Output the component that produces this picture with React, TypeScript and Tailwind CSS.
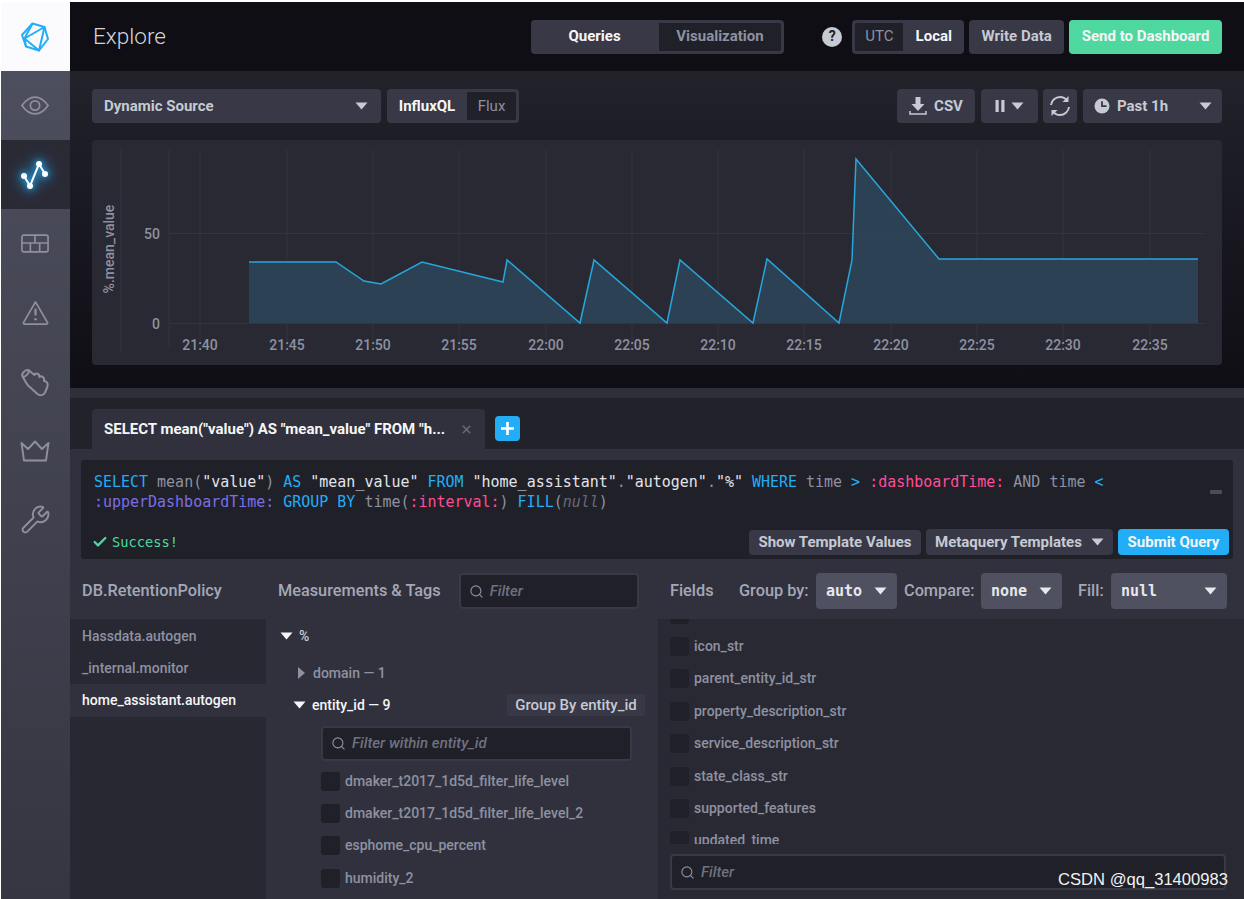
import { Check, Search, Wrench, X } from "lucide-react";
import { ReactNode } from "react";

const Caret = ({ className = "" }: { className?: string }) => (
  <svg width="13" height="8" viewBox="0 0 13 8" className={className}>
    <path d="M0.5 0.5h12L6.5 7.5z" fill="currentColor" />
  </svg>
);

const Logo = () => (
  <svg width="30" height="30" viewBox="0 0 30 30" fill="none" stroke="#22ADF6" strokeWidth="2" strokeLinejoin="round">
    <path d="M12.5 1.5 L24.5 5 L28 17 L19 28.5 L6 24.5 L2 13 Z" />
    <path d="M12.5 1.5 L4.5 16.5 L19 28.5 L24.5 5 L4.5 16.5 M4.5 16.5 L6 24.5" />
  </svg>
);

const NavIcons: Record<string, ReactNode> = {
  eye: (
    <svg width="28" height="19" viewBox="0 0 30 20" fill="none" stroke="currentColor" strokeWidth="1.8">
      <path d="M1 10 C6 3 10 1 15 1 S24 3 29 10 C24 17 20 19 15 19 S6 17 1 10Z" />
      <circle cx="15" cy="10" r="5" />
    </svg>
  ),
  table: (
    <svg width="28" height="19" viewBox="0 0 30 20" fill="none" stroke="currentColor" strokeWidth="1.8">
      <rect x="1" y="1" width="28" height="18" rx="2" />
      <path d="M1 9.5h28M15 1v8.5M10 9.5v9.5M20 9.5v9.5" />
    </svg>
  ),
  alert: (
    <svg width="27" height="25" viewBox="0 0 28 26" fill="none" stroke="currentColor" strokeWidth="1.8" strokeLinejoin="round">
      <path d="M14 2 L26.5 23.5 Q27 25 25 25 L3 25 Q1 25 1.5 23.5 Z" />
      <path d="M14 9v7" strokeWidth="2.4" />
      <circle cx="14" cy="20" r="1.3" fill="currentColor" stroke="none" />
    </svg>
  ),
  hand: (
    <svg width="30" height="30" viewBox="0 0 30 30" fill="none" stroke="currentColor" strokeWidth="2" strokeLinejoin="round" strokeLinecap="round">
      <path d="M2.5 9.5 C1 6.5 6 1.5 9 3.5 L14.5 8 C15.5 5.5 19.5 6.5 19.5 10 C21 8.5 25 10 24 14 C26.5 14 28.5 16.5 27.5 19.5 L25 25.5 C23.5 28.5 20 29 17.5 27 L7.5 18 Z" />
      <path d="M3 10 C5.5 10 9 6.5 9 3.5" />
    </svg>
  ),
  crown: (
    <svg width="30" height="22" viewBox="0 0 30 22" fill="none" stroke="currentColor" strokeWidth="1.9" strokeLinejoin="round">
      <path d="M1.5 3 L8 9 L15 1.5 L22 9 L28.5 3 L26 20.5 L4 20.5 Z" />
    </svg>
  ),
};

const NavItem = ({ children }: { children: ReactNode }) => (
  <div className="flex h-[69px] items-center justify-center pr-[1px] text-[#8f8f9e]">{children}</div>
);

const Sidebar = () => (
  <aside className="flex w-[69px] shrink-0 flex-col bg-gradient-to-b from-[#4f5060] to-[#363642]">
    <div className="flex h-[69px] items-center justify-center bg-[#fbfbfd] pr-[1px]">
      <Logo />
    </div>
    <NavItem>{NavIcons.eye}</NavItem>
    <div className="flex h-[69px] items-center justify-center bg-[#2a2a35] pr-[2px]">
      <svg width="34" height="36" viewBox="0 0 34 36" fill="none" className="[filter:drop-shadow(0_0_3px_#22adf6)_drop-shadow(0_0_7px_#22adf6)]">
        <path d="M6 19 L12 29 L21 7 L27 17" stroke="#fff" strokeWidth="2" />
        <circle cx="6" cy="19" r="3" fill="#fff" />
        <circle cx="12" cy="29" r="3" fill="#fff" />
        <circle cx="21" cy="7" r="3" fill="#fff" />
        <circle cx="27" cy="17" r="3" fill="#fff" />
      </svg>
    </div>
    <NavItem>{NavIcons.table}</NavItem>
    <NavItem>{NavIcons.alert}</NavItem>
    <NavItem>{NavIcons.hand}</NavItem>
    <NavItem>{NavIcons.crown}</NavItem>
    <NavItem>
      <Wrench size={31} strokeWidth={1.5} />
    </NavItem>
  </aside>
);

const Btn = ({ className = "", children }: { className?: string; children: ReactNode }) => (
  <div className={`flex items-center whitespace-nowrap rounded-[4px] font-bold ${className}`}>{children}</div>
);

const Header = () => (
  <header className="flex h-[69px] shrink-0 items-center bg-[#0f0e15] pl-[23px] pr-[22px]">
    <h1 className="w-[438px] text-[22.5px] font-light text-[#d2d5dc]">Explore</h1>
    <div className="flex h-[34px] w-[254px] rounded-[4px] bg-[#383846] text-[15px] font-bold">
      <div className="flex w-[128px] items-center justify-center text-[#f6f6f8]">Queries</div>
      <div className="m-[3px] ml-0 flex flex-1 items-center justify-center rounded-r-[2px] bg-[#202028] text-[#8e91a1]">Visualization</div>
    </div>
    <div className="ml-[38px] flex h-5 w-5 items-center justify-center rounded-full bg-[#c6cad3] text-[14px] font-bold text-[#202028]">?</div>
    <div className="ml-[10px] flex h-[34px] w-[112px] rounded-[4px] bg-[#383846] text-[15px] font-bold">
      <div className="m-[3px] mr-0 flex w-[48px] items-center justify-center rounded-l-[2px] bg-[#202028] font-normal text-[#8e91a1]">UTC</div>
      <div className="flex flex-1 items-center justify-center text-[#f6f6f8]">Local</div>
    </div>
    <Btn className="ml-[5px] h-[34px] w-[95px] justify-center bg-[#383846] text-[15px] text-[#c6cad3]">Write Data</Btn>
    <Btn className="ml-[5px] h-[34px] w-[153px] justify-center bg-[#4ed8a0] text-[15px] text-[#f6f6f8]">Send to Dashboard</Btn>
  </header>
);

const Toolbar = () => (
  <div className="flex h-[34px] items-center text-[15px] text-[#c6cad3]">
    <Btn className="h-full w-[289px] justify-between bg-[#383846] pl-3 pr-[13px]">
      Dynamic Source
      <Caret />
    </Btn>
    <div className="ml-[6px] flex h-full w-[132px] rounded-[4px] bg-[#383846] font-bold">
      <div className="flex w-[80px] items-center justify-center text-[#f6f6f8]">InfluxQL</div>
      <div className="m-[3px] ml-0 flex flex-1 items-center justify-center rounded-r-[2px] bg-[#202028] font-normal text-[#8e91a1]">Flux</div>
    </div>
    <Btn className="ml-auto h-full w-[78px] justify-center gap-[7px] bg-[#383846]">
      <svg width="18" height="20" viewBox="0 0 18 20" fill="none">
        <path d="M6.5 1h5v7h4L9 15 2.5 8h4z" fill="currentColor" />
        <path d="M1 15v3h16v-3" stroke="currentColor" strokeWidth="1.5" />
      </svg>
      CSV
    </Btn>
    <Btn className="ml-[6px] h-full w-[57px] justify-center gap-[6px] bg-[#383846]">
      <svg width="10" height="12" viewBox="0 0 10 12">
        <path d="M0.5 0h3.2v12H0.5zM6.3 0h3.2v12H6.3z" fill="currentColor" />
      </svg>
      <Caret />
    </Btn>
    <Btn className="ml-[5px] h-full w-[34px] justify-center bg-[#383846]">
      <svg width="22" height="22" viewBox="0 0 22 22" fill="none" stroke="currentColor" strokeWidth="1.9">
        <path d="M2 10 C2.5 5.5 6.5 2 11 2 C14 2 16.5 3.5 18 5.5" />
        <path d="M20 12 C19.5 16.5 15.5 20 11 20 C8 20 5.5 18.5 4 16.5" />
        <path d="M19.5 1v6h-6z" fill="currentColor" stroke="none" />
        <path d="M2.5 21v-6h6z" fill="currentColor" stroke="none" />
      </svg>
    </Btn>
    <Btn className="ml-[6px] h-full w-[139px] bg-[#383846] pl-[11px] pr-[10px]">
      <svg width="16" height="16" viewBox="0 0 16 16" className="mr-[7px]">
        <circle cx="8" cy="8" r="7.5" fill="currentColor" />
        <path d="M8 3.2v5h4.6" fill="none" stroke="#383846" strokeWidth="1.8" />
      </svg>
      Past 1h
      <Caret className="ml-auto" />
    </Btn>
  </div>
);

// chart geometry uses the page's own pixel coordinates, see the viewBox
const points = [
  [249, 262], [336, 262], [364, 281], [381, 284], [422, 262], [503, 282], [507, 260],
  [580, 323], [594, 260], [667, 323], [680, 260], [753, 323], [767, 259], [839, 323],
  [852, 260], [856, 159], [939, 259], [1198, 259],
];
const ticks = [
  [200, "21:40"], [287, "21:45"], [373, "21:50"], [459, "21:55"], [546, "22:00"], [632, "22:05"],
  [718, "22:10"], [804, "22:15"], [891, "22:20"], [977, "22:25"], [1063, "22:30"], [1150, "22:35"],
] as const;

const Chart = () => {
  const line = points.map((p) => p.join(",")).join(" ");
  return (
    <div className="mt-[17px] h-[225px] overflow-hidden rounded-[4px] bg-[#292933]">
      <svg className="block h-full w-full" viewBox="92 140 1130 225">
        <g stroke="#34343f" strokeWidth="1">
          <path d="M121 147V352M169 150V347" />
          {ticks.map(([x]) => (
            <path key={x} d={`M${x} 150V347`} />
          ))}
          <path d="M170 233.5H1204M170 323.5H1204" />
        </g>
        <polygon points={`249,323 ${line} 1198,323`} fill="#2c4558" fillOpacity="0.9" />
        <polyline points={line} fill="none" stroke="#26a6dc" strokeWidth="1.5" strokeLinejoin="miter" />
        <g fill="#8e91a1" fontSize="14" fontWeight="500">
          <text x="160" y="239" textAnchor="end">50</text>
          <text x="160" y="329" textAnchor="end">0</text>
          {ticks.map(([x, label]) => (
            <text key={label} x={x} y="350" textAnchor="middle">{label}</text>
          ))}
          <text x="0" y="0" transform="translate(114 249) rotate(-90)" textAnchor="middle">%.mean_value</text>
        </g>
      </svg>
    </div>
  );
};

const QueryBox = () => (
  <div className="relative mx-[11px] mt-[11px] flex h-[99px] flex-col rounded-[3px] bg-[#202028]">
    <pre className="pl-[13px] pr-[110px] pt-[12px] font-['DejaVu_Sans_Mono',monospace] text-[14.98px] leading-[20px] text-[#e2e4e9]">
      <span className="text-[#22adf6]">SELECT</span> <span className="text-[#8e91a1]">mean(</span>"value"<span className="text-[#8e91a1]">)</span> <span className="text-[#22adf6]">AS</span> "mean_value" <span className="text-[#22adf6]">FROM</span> "home_assistant"<span className="text-[#8e91a1]">.</span>"autogen"<span className="text-[#8e91a1]">.</span>"%" <span className="text-[#22adf6]">WHERE</span> <span className="text-[#8e91a1]">time</span> <span className="text-[#22adf6]">&gt;</span> <span className="text-[#ff4d96]">:dashboardTime:</span> <span className="text-[#8e91a1]">AND time</span> <span className="text-[#22adf6]">&lt;</span>
      {"\n"}
      <span className="text-[#7c6ee6]">:upperDashboardTime:</span> <span className="text-[#22adf6]">GROUP BY</span> <span className="text-[#8e91a1]">time(</span><span className="text-[#ff4d96]">:interval:</span><span className="text-[#8e91a1]">)</span> <span className="text-[#22adf6]">FILL</span><span className="text-[#8e91a1]">(</span><span className="italic text-[#676978]">null</span><span className="text-[#8e91a1]">)</span>
    </pre>
    <div className="absolute right-[11px] top-[30px] h-1 w-3 rounded-[1px] bg-[#4a4b58]" />
    <div className="mt-auto flex items-center pb-[4px] pl-[11px] pr-[4px]">
      <Check size={16} strokeWidth={3.5} className="text-[#4ed8a0]" />
      <span className="ml-[4px] font-['DejaVu_Sans_Mono',monospace] text-[13.7px] text-[#4ed8a0]">Success!</span>
      <Btn className="ml-auto h-[25px] w-[172px] justify-center bg-[#383846] text-[15px] text-[#c6cad3]">Show Template Values</Btn>
      <Btn className="ml-[5px] h-[26px] w-[187px] justify-between bg-[#383846] pl-[9px] pr-[9px] text-[15px] text-[#c6cad3]">
        Metaquery Templates
        <Caret />
      </Btn>
      <Btn className="ml-[5px] h-[26px] w-[111px] justify-center bg-[#22adf6] text-[15px] text-[#f6f6f8]">Submit Query</Btn>
    </div>
  </div>
);

const Filter = ({ text, className = "" }: { text: string; className?: string }) => (
  <div className={`flex items-center gap-[6px] rounded-[4px] border-2 border-[#383846] bg-[#202028] pl-2 text-[15px] font-medium italic text-[#6f7180] ${className}`}>
    <Search size={15} strokeWidth={1.8} className="text-[#8e91a1]" />
    {text}
  </div>
);

const Dropdown = ({ label, className = "" }: { label: string; className?: string }) => (
  <div className={`flex h-[36px] shrink-0 items-center justify-between rounded-[4px] bg-[#4f5060] pl-[10px] pr-[10px] font-['DejaVu_Sans_Mono',monospace] text-[15px] font-bold text-[#e7e8eb] ${className}`}>
    {label}
    <Caret />
  </div>
);

const ColumnHeads = () => (
  <div className="flex h-[60px] items-center pt-[4px] text-[16.3px] font-medium text-[#a4a8b6]">
    <div className="w-[196px] pl-3">DB.RetentionPolicy</div>
    <div className="flex w-[392px] items-center pl-3">
      Measurements &amp; Tags
      <Filter text="Filter" className="ml-[18px] h-[36px] w-[180px]" />
    </div>
    <div className="flex flex-1 items-center pl-3">
      <span className="w-[44px]">Fields</span>
      <span className="ml-[25px] w-[70px] whitespace-nowrap">Group by:</span>
      <Dropdown label="auto" className="ml-[7px] w-[81px]" />
      <span className="ml-[7px] w-[70px] whitespace-nowrap">Compare:</span>
      <Dropdown label="none" className="ml-[7px] w-[81px]" />
      <span className="ml-[16px] w-[25px]">Fill:</span>
      <Dropdown label="null" className="ml-[8px] w-[116px]" />
    </div>
  </div>
);

const CheckRow = ({ label }: { label: string }) => (
  <div className="flex h-[32.4px] items-center gap-[5px] text-[14px] font-medium text-[#8e91a1]">
    <div className="h-[19px] w-[19px] shrink-0 rounded-[3px] bg-[#202028]" />
    {label}
  </div>
);

const DbColumn = () => (
  <div className="w-[196px] bg-[#282832] pt-[1px] text-[14px] font-medium text-[#8e91a1]">
    <div className="flex h-[32px] items-center pl-3">Hassdata.autogen</div>
    <div className="flex h-[32px] items-center pl-3">_internal.monitor</div>
    <div className="flex h-[33px] items-center bg-[#31313d] pl-3 text-[#f6f6f8]">home_assistant.autogen</div>
  </div>
);

const TagColumn = () => (
  <div className="w-[392px] overflow-hidden bg-[#31313d] text-[14px] font-medium">
    <div className="flex h-[34px] items-center pl-[14px] text-[#c6cad3]">
      <Caret className="text-[#f6f6f8]" />
      <span className="ml-[6px]">%</span>
    </div>
    <div className="mt-[4px] flex h-[32px] items-center pl-[32px] text-[#8e91a1]">
      <svg width="7" height="12" viewBox="0 0 7 12"><path d="M0 0l7 6-7 6z" fill="currentColor" /></svg>
      <span className="ml-[8px]">domain — 1</span>
    </div>
    <div className="flex h-[32px] items-center pl-[27px] pr-[13px] text-[#f6f6f8]">
      <Caret />
      <span className="ml-[6px]">entity_id — 9</span>
      <div className="ml-auto flex h-[22px] w-[138px] items-center justify-center rounded-[3px] bg-[#383846] text-[15px] text-[#c6cad3]">Group By entity_id</div>
    </div>
    <div className="ml-[55px] w-[311px]">
      <Filter text="Filter within entity_id" className="mt-[5px] h-[35px]" />
      <div className="mt-[4px]">
        <CheckRow label="dmaker_t2017_1d5d_filter_life_level" />
        <CheckRow label="dmaker_t2017_1d5d_filter_life_level_2" />
        <CheckRow label="esphome_cpu_percent" />
        <CheckRow label="humidity_2" />
      </div>
    </div>
  </div>
);

const fields = ["icon_str", "parent_entity_id_str", "property_description_str", "service_description_str", "state_class_str", "supported_features", "updated_time"];

const FieldColumn = () => (
  <div className="flex min-w-0 flex-1 flex-col bg-[#292933]">
    <div className="h-[225px] overflow-hidden pl-3">
      <div className="-mt-[21px]">
        <CheckRow label="" />
        {fields.map((f) => (
          <CheckRow key={f} label={f} />
        ))}
      </div>
    </div>
    <Filter text="Filter" className="ml-3 mt-[10px] h-[36px] w-[556px]" />
  </div>
);

export default function App() {
  return (
    <div className="relative flex h-[899px] w-[1244px] overflow-hidden bg-white pl-[1px] pt-[2px] font-[Roboto,sans-serif]">
      <Sidebar />
      <main className="flex min-w-0 flex-1 flex-col">
        <Header />
        <section className="h-[317px] shrink-0 bg-gradient-to-b from-[#22222b] to-[#0f0e15] px-[22px] pt-[18px]">
          <Toolbar />
          <Chart />
        </section>
        <div className="h-[10px] shrink-0 bg-[#2f2f3a]" />
        <div className="flex h-[51px] shrink-0 items-end bg-[#22222b] pl-[22px]">
          <div className="flex h-10 w-[393px] items-center justify-between whitespace-nowrap rounded-t-[4px] bg-[#31313d] pl-3 pr-3 text-[15px] font-bold text-[#f6f6f8]">
            <span>SELECT mean("value") AS "mean_value" FROM "h...</span>
            <X size={13} strokeWidth={3} className="text-[#676978]" />
          </div>
          <div className="mb-2 ml-[10px] flex h-[25px] w-[25px] items-center justify-center rounded-[4px] bg-[#22adf6] text-white">
            <svg width="15" height="15" viewBox="0 0 15 15"><path d="M6.2 1h2.6v5.2H14v2.6H8.8V14H6.2V8.8H1V6.2h5.2z" fill="currentColor" /></svg>
          </div>
        </div>
        <div className="flex min-h-0 flex-1 flex-col bg-[#31313d]">
          <QueryBox />
          <ColumnHeads />
          <div className="flex min-h-0 flex-1">
            <DbColumn />
            <TagColumn />
            <FieldColumn />
          </div>
        </div>
      </main>
      <div className="absolute bottom-[6px] right-[16px] font-['Liberation_Sans',sans-serif] text-[16.6px] text-[#f2f2f2]">CSDN @qq_31400983</div>
    </div>
  );
}
